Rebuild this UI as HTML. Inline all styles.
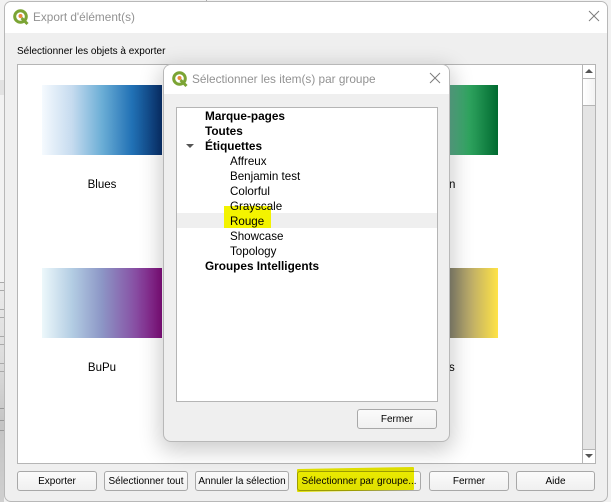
<!DOCTYPE html>
<html lang="fr">
<head>
<meta charset="utf-8">
<style>
html,body{margin:0;padding:0}
body{width:611px;height:502px;overflow:hidden;position:relative;background:#f2f2f2;font-family:"Liberation Sans",sans-serif;font-size:11px;color:#000}
.a{position:absolute}
.dlg{position:absolute;background:#efefef;border:1px solid #b8b8b8;box-sizing:border-box;overflow:hidden}
.bar{position:absolute;left:0;top:0;right:0;background:#fff}
.title{position:absolute;color:#929292;font-size:11.8px;white-space:nowrap}
.btn{position:absolute;box-sizing:border-box;height:20px;top:471px;border:1px solid #a8a8a8;border-radius:3px;background:linear-gradient(#fbfbfb,#f0f0f0);text-align:center;line-height:19px;font-size:10px;white-space:nowrap;overflow:hidden}
.grad{position:absolute;width:120px;height:70px}
.lbl{position:absolute;font-size:11.5px;text-align:center}
.t{position:absolute;font-size:11.6px;line-height:15px;white-space:nowrap}
.b{font-weight:bold;left:205px;font-size:11.8px}
.c{left:230px}
</style>
</head>
<body>
<!-- background window remnants -->
<div class="a" style="left:0;top:80px;width:5px;height:15px;background:#e2e2e2"></div>
<div class="a" style="left:0;top:283px;width:4px;height:219px;background:linear-gradient(#eaeaea,#dcdcdc 35%,#c4c4c4 65%,#cfcfcf)"></div>
<div class="a" style="left:0;top:282px;width:5px;height:1px;background:#aaa"></div>
<div class="a" style="left:0;top:290px;width:5px;height:1px;background:#aaa"></div>
<div class="a" style="left:0;top:309px;width:5px;height:1px;background:#aaa"></div>
<div class="a" style="left:0;top:317px;width:5px;height:1px;background:#aaa"></div>
<div class="a" style="left:0;top:336px;width:5px;height:1px;background:#aaa"></div>
<div class="a" style="left:0;top:344px;width:5px;height:1px;background:#aaa"></div>
<div class="a" style="left:0;top:363px;width:5px;height:1px;background:#aaa"></div>
<div class="a" style="left:0;top:371px;width:5px;height:1px;background:#aaa"></div>
<div class="a" style="left:0;top:408px;width:4px;height:1px;background:#999"></div>
<div class="a" style="left:0;top:420px;width:4px;height:1px;background:#999"></div>
<div class="a" style="left:0;top:430px;width:4px;height:1px;background:#999"></div>
<div class="a" style="left:44px;top:-10px;font-size:11.5px;line-height:13px">Affreux</div>
<div class="a" style="left:206px;top:0;width:1px;height:2px;background:#aaa"></div>

<!-- main dialog -->
<div class="dlg" style="left:4px;top:1px;width:604px;height:501px;border-radius:7px">
  <div class="bar" style="height:31px"></div>
</div>
<svg class="a" style="left:12px;top:8px" width="18" height="18" viewBox="0 0 18 18">
  <circle cx="8.5" cy="8.5" r="5.8" fill="#fff" stroke="#7ba434" stroke-width="3"/>
  <path d="M9.5 10 L15.5 16" stroke="#7ba434" stroke-width="3" fill="none"/>
  <circle cx="8.5" cy="8" r="2" fill="#e8893a"/>
</svg>
<div class="title" style="left:33px;top:10px">Export d'élément(s)</div>
<svg class="a" style="left:588px;top:10px" width="12" height="12" viewBox="0 0 12 12"><path d="M1 1L11 11M11 1L1 11" stroke="#7d7d7d" stroke-width="1" fill="none"/></svg>
<div class="a" style="left:17px;top:46px;font-size:10px;white-space:nowrap">Sélectionner les objets à exporter</div>

<!-- list -->
<div class="a" style="left:17px;top:64px;width:579px;height:400px;box-sizing:border-box;background:#fff;border:1px solid #b5b5b5"></div>
<div class="grad" style="left:42px;top:85px;background:linear-gradient(90deg,#f5fafe,#c6dbef 25%,#6baed6 50%,#2171b5 75%,#08306b)"></div>
<div class="grad" style="left:378px;top:85px;background:linear-gradient(90deg,#f0f9f0,#a1d99b 25%,#5aa888 60%,#2fa45f 76%,#006a30 100%)"></div>
<div class="grad" style="left:42px;top:268px;background:linear-gradient(90deg,#edf8fb,#b3cde3 25%,#8c96c6 50%,#8856a7 75%,#810f7c)"></div>
<div class="grad" style="left:378px;top:268px;background:linear-gradient(90deg,#3a3f5c,#85826e 60%,#bfae68 78%,#ffe345)"></div>
<div class="lbl" style="left:42px;top:179px;width:120px">Blues</div>
<div class="lbl" style="left:42px;top:362px;width:120px">BuPu</div>
<div class="lbl" style="left:449px;top:179px">n</div>
<div class="lbl" style="left:449px;top:362px">s</div>

<!-- scrollbar -->
<div class="a" style="left:582px;top:65px;width:13px;height:398px;box-sizing:border-box;border-left:1px solid #b5b5b5;background:#e4e4e4"></div>
<div class="a" style="left:582px;top:65px;width:13px;height:14px;box-sizing:border-box;border-left:1px solid #b5b5b5;border-bottom:1px solid #b5b5b5;background:#fff"></div>
<div class="a" style="left:582px;top:79px;width:13px;height:27px;box-sizing:border-box;border-left:1px solid #b5b5b5;border-bottom:1px solid #b5b5b5;background:linear-gradient(90deg,#fff,#f3f3f3)"></div>
<div class="a" style="left:582px;top:449px;width:13px;height:14px;box-sizing:border-box;border-left:1px solid #b5b5b5;border-top:1px solid #b5b5b5;background:#fff"></div>
<svg class="a" style="left:584px;top:68px" width="10" height="6"><path d="M1 5H9L5 1Z" fill="#555"/></svg>
<svg class="a" style="left:584px;top:453px" width="10" height="6"><path d="M1 1H9L5 5Z" fill="#555"/></svg>

<!-- bottom buttons -->
<div class="btn" style="left:17px;width:80px">Exporter</div>
<div class="btn" style="left:104px;width:84px">Sélectionner tout</div>
<div class="btn" style="left:195px;width:94px">Annuler la sélection</div>
<div class="btn" style="left:297px;width:124px">Sélectionner par groupe...</div>
<div class="a" style="left:297px;top:468px;width:117px;height:23px;background:#eeee00;mix-blend-mode:multiply;border-radius:1px;transform:skewY(-1deg)"></div>
<div class="btn" style="left:429px;width:80px">Fermer</div>
<div class="btn" style="left:516px;width:79px">Aide</div>

<!-- inner dialog -->
<div class="dlg" style="left:163px;top:64px;width:287px;height:378px;border-radius:8px;box-shadow:0 6px 22px 3px rgba(0,0,0,.2)">
  <div class="bar" style="height:29px"></div>
</div>
<svg class="a" style="left:171px;top:70px" width="18" height="18" viewBox="0 0 18 18">
  <circle cx="8.5" cy="8.5" r="5.8" fill="#fff" stroke="#7ba434" stroke-width="3"/>
  <path d="M9.5 10 L15.5 16" stroke="#7ba434" stroke-width="3" fill="none"/>
  <circle cx="8.5" cy="8" r="2" fill="#e8893a"/>
</svg>
<div class="title" style="left:192px;top:72px">Sélectionner les item(s) par groupe</div>
<svg class="a" style="left:429px;top:72px" width="12" height="12" viewBox="0 0 12 12"><path d="M1 1L11 11M11 1L1 11" stroke="#7d7d7d" stroke-width="1" fill="none"/></svg>

<!-- tree -->
<div class="a" style="left:176px;top:107px;width:262px;height:295px;box-sizing:border-box;background:#fff;border:1px solid #b5b5b5"></div>
<div class="a" style="left:177px;top:213px;width:260px;height:15px;background:#efefef"></div>
<div class="a" style="left:224px;top:206px;width:47px;height:22px;background:#f3f300"></div>
<svg class="a" style="left:186px;top:143px" width="8" height="6"><path d="M0 1H8L4 5Z" fill="#555"/></svg>
<div class="t b" style="top:109px">Marque-pages</div>
<div class="t b" style="top:124px">Toutes</div>
<div class="t b" style="top:139px">Étiquettes</div>
<div class="t c" style="top:154px">Affreux</div>
<div class="t c" style="top:169px">Benjamin test</div>
<div class="t c" style="top:184px">Colorful</div>
<div class="t c" style="top:199px">Grayscale</div>
<div class="t c" style="top:214px">Rouge</div>
<div class="t c" style="top:229px">Showcase</div>
<div class="t c" style="top:244px">Topology</div>
<div class="t b" style="top:259px">Groupes Intelligents</div>
<div class="btn" style="left:357px;top:409px;width:80px">Fermer</div>
</body>
</html>
